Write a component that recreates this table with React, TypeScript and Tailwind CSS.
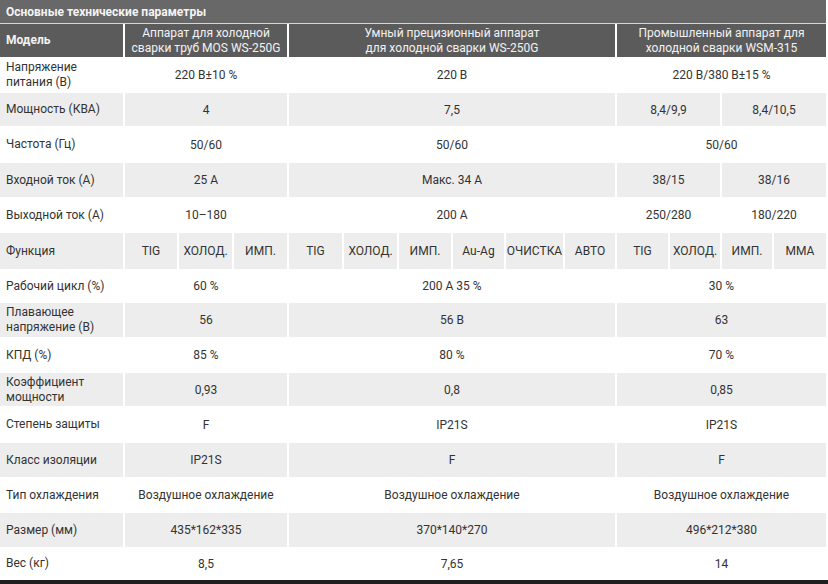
import React from "react";

type Cell = { text: React.ReactNode; span?: number };
type Row = { label: React.ReactNode; cells: Cell[]; gray?: boolean; h: string };

const GRID =
  "grid grid-cols-[123px_52px_53px_53px_53px_53px_52px_51px_57px_50px_51px_50px_50px_52px] gap-x-[2px]";

const SPAN: Record<number, string> = {
  1: "col-span-1",
  2: "col-span-2",
  3: "col-span-3",
  4: "col-span-4",
  6: "col-span-6",
};

const three = (a: string, b: string, c: string): Cell[] => [
  { text: a, span: 3 },
  { text: b, span: 6 },
  { text: c, span: 4 },
];

const rows: Row[] = [
  {
    label: (
      <>
        Напряжение
        <br />
        питания (В)
      </>
    ),
    cells: three("220 В±10 %", "220 В", "220 В/380 В±15 %"),
    h: "h-[36px]",
  },
  {
    label: "Мощность (КВА)",
    gray: true,
    cells: [
      { text: "4", span: 3 },
      { text: "7,5", span: 6 },
      { text: "8,4/9,9", span: 2 },
      { text: "8,4/10,5", span: 2 },
    ],
    h: "h-[33px]",
  },
  { label: "Частота (Гц)", cells: three("50/60", "50/60", "50/60"), h: "h-[37px]" },
  {
    label: "Входной ток (А)",
    gray: true,
    cells: [
      { text: "25 А", span: 3 },
      { text: "Макс. 34 А", span: 6 },
      { text: "38/15", span: 2 },
      { text: "38/16", span: 2 },
    ],
    h: "h-[34px]",
  },
  {
    label: "Выходной ток (А)",
    cells: [
      { text: "10–180", span: 3 },
      { text: "200 А", span: 6 },
      { text: "250/280", span: 2 },
      { text: "180/220", span: 2 },
    ],
    h: "h-[36px]",
  },
  {
    label: "Функция",
    gray: true,
    cells: [
      "TIG",
      "ХОЛОД.",
      "ИМП.",
      "TIG",
      "ХОЛОД.",
      "ИМП.",
      "Au-Ag",
      "ОЧИСТКА",
      "АВТО",
      "TIG",
      "ХОЛОД.",
      "ИМП.",
      "MMA",
    ].map((t) => ({ text: t })),
    h: "h-[36px]",
  },
  { label: "Рабочий цикл (%)", cells: three("60 %", "200 А 35 %", "30 %"), h: "h-[34px]" },
  {
    label: (
      <>
        Плавающее
        <br />
        напряжение (В)
      </>
    ),
    gray: true,
    cells: three("56", "56 В", "63"),
    h: "h-[34px]",
  },
  { label: "КПД (%)", cells: three("85 %", "80 %", "70 %"), h: "h-[36px]" },
  {
    label: (
      <>
        Коэффициент
        <br />
        мощности
      </>
    ),
    gray: true,
    cells: three("0,93", "0,8", "0,85"),
    h: "h-[33px]",
  },
  { label: "Степень защиты", cells: three("F", "IP21S", "IP21S"), h: "h-[37px]" },
  { label: "Класс изоляции", gray: true, cells: three("IP21S", "F", "F"), h: "h-[34px]" },
  {
    label: "Тип охлаждения",
    cells: three("Воздушное охлаждение", "Воздушное охлаждение", "Воздушное охлаждение"),
    h: "h-[36px]",
  },
  {
    label: "Размер (мм)",
    gray: true,
    cells: three("435*162*335", "370*140*270", "496*212*380"),
    h: "h-[34px]",
  },
  { label: "Вес (кг)", cells: three("8,5", "7,65", "14"), h: "h-[33px]" },
];

const SpecRow = ({ row }: { row: Row }) => {
  const bg = row.gray ? "bg-[#ededed]" : "bg-white";
  return (
    <div className={`${GRID} ${row.h}`}>
      <div className={`${bg} flex items-center pl-[6px] leading-[15px]`}>{row.label}</div>
      {row.cells.map((c, i) => (
        <div
          key={i}
          className={`${bg} ${SPAN[c.span ?? 1]} flex items-center justify-center text-center whitespace-nowrap`}
        >
          {c.text}
        </div>
      ))}
    </div>
  );
};

export default function App() {
  return (
    <div
      className="w-[828px] h-[584px] bg-white text-[#333] text-[12px] leading-[16px] overflow-hidden"
      style={{ fontFamily: 'Roboto, "Noto Sans", sans-serif' }}
    >
      <div className="w-[826px]">
        <div className="h-[23px] bg-[#686868] text-[#f4f4f4] font-bold flex items-center pl-[6px]">
          Основные технические параметры
        </div>
        <div className="h-[1px] bg-[#d6d6d6]" />
        <div className={`${GRID} h-[33px] text-[#f2f2f2] leading-[15px]`}>
          <div className="bg-[#5b5b5b] flex items-center pl-[6px] font-bold">Модель</div>
          <div className="bg-[#5b5b5b] col-span-3 flex items-center justify-center text-center">
            Аппарат для холодной
            <br />
            сварки труб MOS WS-250G
          </div>
          <div className="bg-[#5b5b5b] col-span-6 flex items-center justify-center text-center">
            Умный прецизионный аппарат
            <br />
            для холодной сварки WS-250G
          </div>
          <div className="bg-[#5b5b5b] col-span-4 flex items-center justify-center text-center">
            Промышленный аппарат для
            <br />
            холодной сварки WSM-315
          </div>
        </div>
        {rows.map((r, i) => (
          <SpecRow key={i} row={r} />
        ))}
      </div>
      <div className="h-[4px] bg-[#1f1f1f]" />
    </div>
  );
}
